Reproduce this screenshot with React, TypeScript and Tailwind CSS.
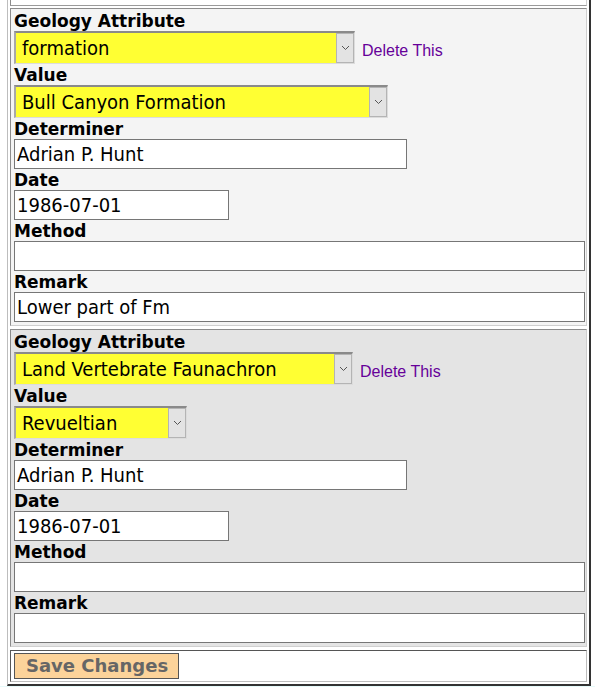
import React from "react";

const label = "block h-[21px] pt-[1px] text-[17px] leading-[21px] font-bold text-black";
const field = "h-[30px] border border-[#767676] bg-white px-[2px] text-[20px] leading-[28px] text-black";
const inputFont = { fontFamily: '"DejaVu Sans Condensed", "Open Sans", sans-serif' };

function Chevron() {
  return (
    <svg width="9" height="6" viewBox="0 0 9 6" fill="none">
      <path d="M1 1l3.5 3.5L8 1" stroke="#555" strokeWidth="1" />
    </svg>
  );
}

function Select({ value, width }: { value: string; width: string }) {
  return (
    <div className={`flex h-[33px] ${width} border-t-2 border-l-2 border-t-[#8a8a8a] border-l-[#a8a8a8] border-r border-b border-r-[#dcdcdc] border-b-[#dcdcdc] bg-[#ffff33]`}>
      <div className="flex-1 truncate pl-[6px] text-[20px] leading-[30px] text-black" style={inputFont}>
        {value}
      </div>
      <div className="flex w-[18px] items-center justify-center border border-[#b4b4b4] bg-[#e3e3e3]">
        <Chevron />
      </div>
    </div>
  );
}

function Block(props: {
  bg: string;
  attr: string;
  attrWidth: string;
  value: string;
  valueWidth: string;
  determiner: string;
  date: string;
  method: string;
  remark: string;
}) {
  return (
    <div className={`border border-t-[#8c8c8c] border-l-[#8c8c8c] border-r-[#cfcfcf] border-b-[#cfcfcf] ${props.bg} pl-[3px] pr-[1px] pt-[1px] pb-[3px]`}>
      <span className={label}>Geology Attribute</span>
      <div className="flex items-center">
        <Select value={props.attr} width={props.attrWidth} />
        <a className="ml-[7px] mt-[7px] text-[16px] text-[#660099]" style={{ fontFamily: '"Liberation Sans", Arial, sans-serif' }}>
          Delete This
        </a>
      </div>
      <span className={label}>Value</span>
      <Select value={props.value} width={props.valueWidth} />
      <span className={label}>Determiner</span>
      <div className={`${field} w-[393px]`} style={inputFont}>{props.determiner}</div>
      <span className={label}>Date</span>
      <div className={`${field} w-[215px]`} style={inputFont}>{props.date}</div>
      <span className={label}>Method</span>
      <div className={`${field} w-full`} style={inputFont}>{props.method}</div>
      <span className={label}>Remark</span>
      <div className={`${field} w-full`} style={inputFont}>{props.remark}</div>
    </div>
  );
}

export default function App() {
  return (
    <div className="h-[687px] overflow-hidden bg-white" style={{ fontFamily: '"DejaVu Sans", Verdana, sans-serif' }}>
      <div className="ml-[7px] w-[584px] border border-t-0 border-l-[#bdbdbd] border-r-2 border-r-[#333] border-b-2 border-b-[#333] px-[2px] pb-[2px]">
        <div className="h-[6px] border border-t-0 border-l-[#8c8c8c] border-r-[#cfcfcf] border-b-[#9a9a9a] bg-white" />
        <div className="mt-[2px] flex flex-col gap-[3px]">
          <Block
            bg="bg-[#f4f4f4]"
            attr="formation"
            attrWidth="w-[341px]"
            value="Bull Canyon Formation"
            valueWidth="w-[374px]"
            determiner="Adrian P. Hunt"
            date="1986-07-01"
            method=""
            remark="Lower part of Fm"
          />
          <Block
            bg="bg-[#e4e4e4]"
            attr="Land Vertebrate Faunachron"
            attrWidth="w-[339px]"
            value="Revueltian"
            valueWidth="w-[173px]"
            determiner="Adrian P. Hunt"
            date="1986-07-01"
            method=""
            remark=""
          />
          <div className="border border-t-[#555] border-l-[#555] border-r-[#bdbdbd] border-b-[#bdbdbd] bg-white px-[3px] py-[2px]">
            <button className="h-[26px] w-[165px] border border-[#555] bg-[#fcd39a] text-left pl-[11px] text-[18px] font-bold leading-[24px] text-[#666]">
              Save Changes
            </button>
          </div>
        </div>
      </div>
      <div className="h-[4px] bg-[#e6fafa]" />
    </div>
  );
}
